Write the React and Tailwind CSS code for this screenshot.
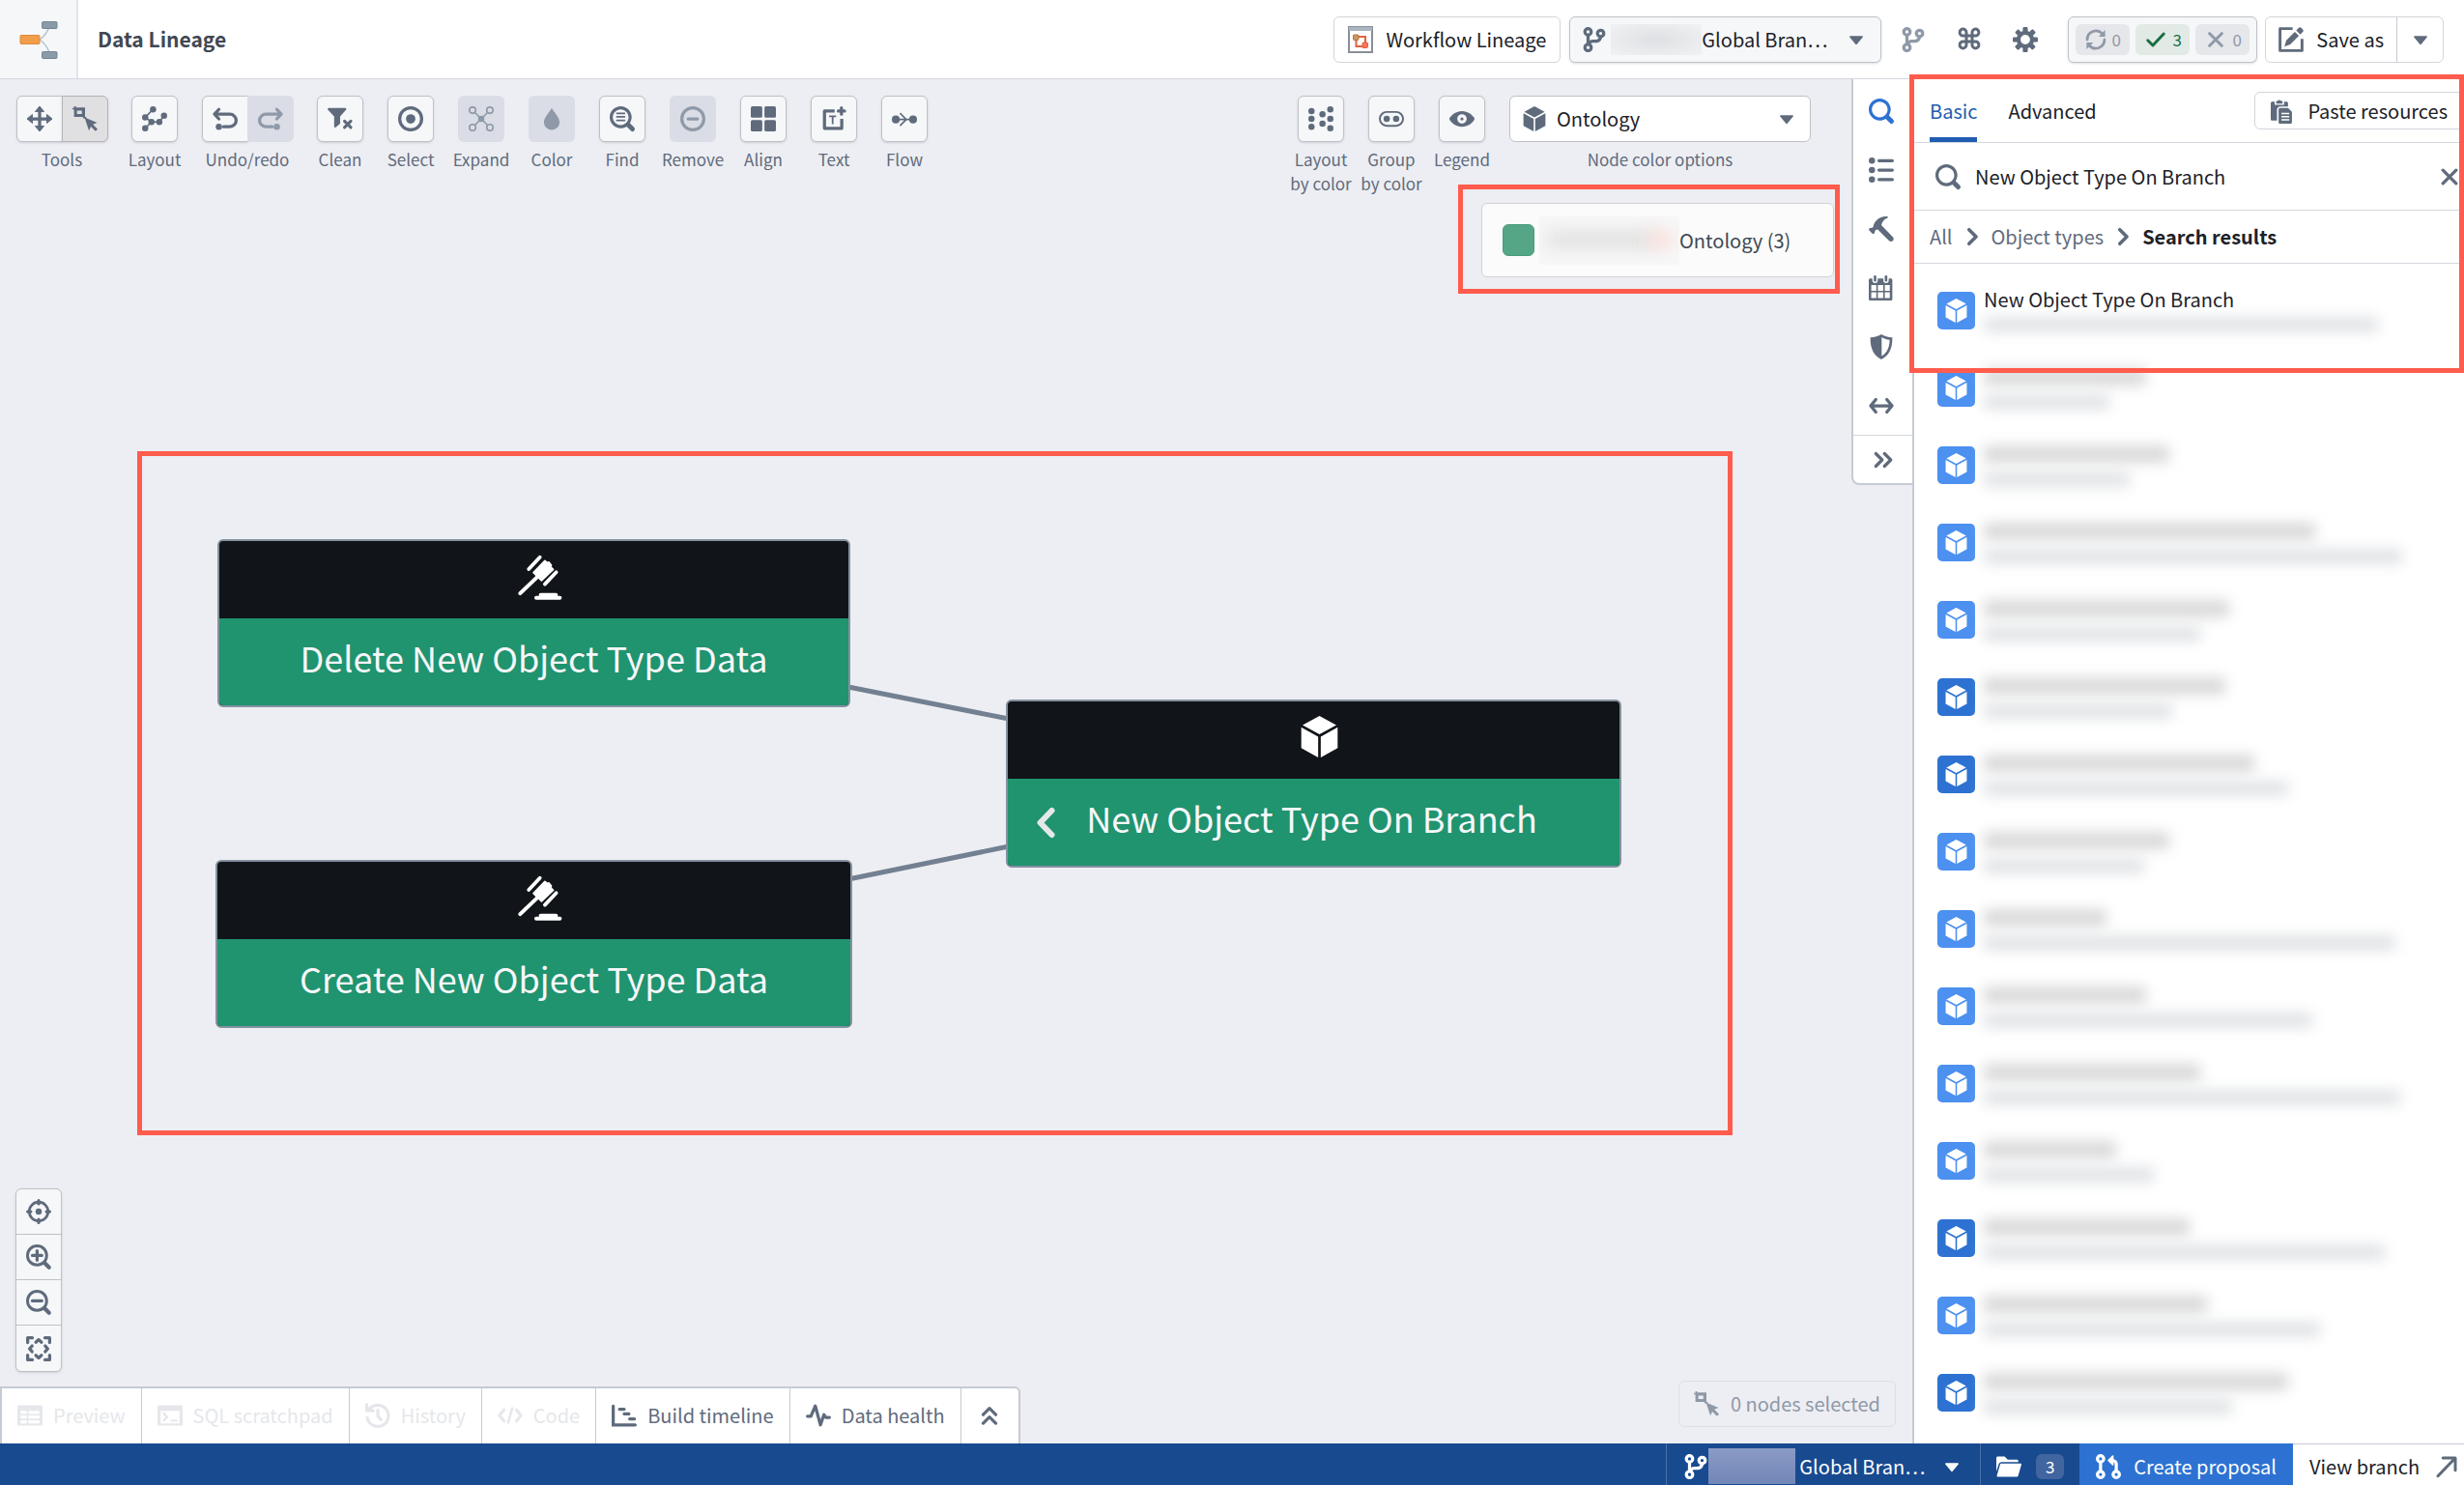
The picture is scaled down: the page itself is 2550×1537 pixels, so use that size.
import React, { useState } from 'react';
import clsx from 'clsx';

// 16x16 icon set, filled with the current text color
const icons = {
  search: (
    <path d="M15.55 13.43l-2.67-2.68a6.94 6.94 0 001.11-3.76c0-3.87-3.13-7-7-7s-7 3.13-7 7 3.13 7 7 7c1.39 0 2.68-.42 3.76-1.11l2.68 2.67a1.498 1.498 0 102.12-2.12zm-8.56-1.44c-2.76 0-5-2.24-5-5s2.24-5 5-5 5 2.24 5 5-2.24 5-5 5z" />
  ),
  branch: (
    <path d="M12 1c-1.66 0-3 1.34-3 3 0 1.25.76 2.32 1.85 2.77A2.02 2.02 0 019 8H7c-.73 0-1.41.21-2 .55V5.82C6.16 5.4 7 4.3 7 3c0-1.66-1.34-3-3-3S1 1.34 1 3c0 1.3.84 2.4 2 2.82v4.37c-1.16.4-2 1.51-2 2.81 0 1.66 1.34 3 3 3s3-1.34 3-3c0-1.04-.53-1.95-1.32-2.49.35-.31.81-.51 1.32-.51h2c1.92 0 3.52-1.35 3.91-3.15A2.996 2.996 0 0012 1zM4 2c.55 0 1 .45 1 1s-.45 1-1 1-1-.45-1-1 .45-1 1-1zm0 12c-.55 0-1-.45-1-1s.45-1 1-1 1 .45 1 1-.45 1-1 1zm8-9c-.55 0-1-.45-1-1s.45-1 1-1 1 .45 1 1-.45 1-1 1z" />
  ),
  cog: (
    <path d="M15.19 6.39h-1.85c-.11-.37-.27-.71-.45-1.04l1.36-1.36c.31-.31.31-.82 0-1.13l-1.13-1.13a.803.803 0 00-1.13 0l-1.36 1.36c-.33-.17-.67-.33-1.04-.44V.79c0-.44-.36-.8-.8-.8h-1.6c-.44 0-.8.36-.8.8v1.86c-.39.12-.75.28-1.1.47l-1.3-1.3c-.3-.3-.79-.3-1.09 0L1.82 2.91c-.3.3-.3.79 0 1.09l1.3 1.3c-.2.34-.36.7-.48 1.09H.79c-.44 0-.8.36-.8.8v1.6c0 .44.36.8.8.8h1.85c.11.37.27.71.45 1.04l-1.36 1.36c-.31.31-.31.82 0 1.13l1.13 1.13c.31.31.82.31 1.13 0l1.36-1.36c.33.18.67.33 1.04.44v1.86c0 .44.36.8.8.8h1.6c.44 0 .8-.36.8-.8v-1.86c.39-.12.75-.28 1.1-.47l1.3 1.3c.3.3.79.3 1.09 0l1.09-1.09c.3-.3.3-.79 0-1.09l-1.3-1.3c.19-.35.36-.71.48-1.1h1.85c.44 0 .8-.36.8-.8v-1.6a.816.816 0 00-.81-.79zm-7.2 4.6c-1.66 0-3-1.34-3-3s1.34-3 3-3 3 1.34 3 3-1.34 3-3 3z" />
  ),
  command: (
    <g fill="none" stroke="currentColor" strokeWidth="2">
      <rect x="6" y="6" width="4" height="4" />
      <path d="M6 6H3.8A2.3 2.3 0 116 3.8zM10 6V3.8A2.3 2.3 0 1112.2 6zM10 10h2.2a2.3 2.3 0 11-2.2 2.2zM6 10v2.2A2.3 2.3 0 113.8 10z" />
    </g>
  ),
  caret: <path d="M3.9 5.5h8.2c.5 0 .7.5.4.9L8.5 11.2a.7.7 0 01-1 0L3.5 6.4c-.3-.4-.1-.9.4-.9z" />,
  move: (
    <g>
      <path d="M8 0L5.2 3.4h5.6zM8 16l-2.8-3.4h5.6zM0 8l3.4-2.8v5.6zM16 8l-3.4-2.8v5.6z" stroke="currentColor" strokeWidth=".6" strokeLinejoin="round" />
      <path d="M7 2.5h2V7h4.5v2H9v4.5H7V9H2.5V7H7z" />
    </g>
  ),
  areaSelect: (
    <g>
      <path d="M1 0h1.2v.8H8v5.9h.8v1H6.7v-1H1V2H0V1h1zM2.9 2.7v2.2H6V2.7z" fillRule="evenodd" />
      <path d="M7.7 7l8 3.4-2.7 1.2 3 3-1.3 1.3-3-3-1.2 2.6z" />
    </g>
  ),
  graph: (
    <g>
      <path d="M2 7L7 2M2 14l4-4M2 7l4 3h5l3-4" fill="none" stroke="currentColor" strokeWidth="1" />
      <circle cx="7" cy="2" r="2" /><circle cx="2" cy="7" r="2" /><circle cx="14" cy="6" r="2" />
      <circle cx="6" cy="10" r="2" /><circle cx="11" cy="10" r="2" /><circle cx="2" cy="14" r="2" />
    </g>
  ),
  undo: (
    <g>
      <path d="M4 2L1.2 5 4 8M1.5 5H11a4 4 0 010 8H7" fill="none" stroke="currentColor" strokeWidth="2" strokeLinecap="round" strokeLinejoin="round" />
      <circle cx="4" cy="13" r="2" />
    </g>
  ),
  redo: (
    <g>
      <path d="M12 2l2.8 3L12 8M14.5 5H5a4 4 0 000 8h4" fill="none" stroke="currentColor" strokeWidth="2" strokeLinecap="round" strokeLinejoin="round" />
      <circle cx="12" cy="13" r="2" />
    </g>
  ),
  filterRemove: (
    <g>
      <path d="M.8 1h10.4c.7 0 1 .8.5 1.3L8 6.5V11l-3 2.5c-.3.2-.8 0-.8-.4V6.5L.3 2.3C-.2 1.800.1 1 .8 1z" />
      <path d="M10.800 9.500l4 4M14.800 9.500l-4 4" stroke="currentColor" strokeWidth="1.9" strokeLinecap="round" />
    </g>
  ),
  selection: (
    <g>
      <circle cx="8" cy="8" r="7" fill="none" stroke="currentColor" strokeWidth="2" />
      <circle cx="8" cy="8" r="3" />
    </g>
  ),
  layout: (
    <g fill="none" stroke="currentColor" strokeWidth="1">
      <path d="M4 4l8 8M12 4l-8 8" />
      <circle cx="2.5" cy="2.5" r="2" /><circle cx="13.5" cy="2.5" r="2" />
      <circle cx="2.5" cy="13.5" r="2" /><circle cx="13.5" cy="13.5" r="2" />
      <circle cx="8" cy="8" r="2" fill="currentColor" stroke="none" />
    </g>
  ),
  tint: <path d="M8 1c.9 2.1 5 5.8 5 9.300A4.850 4.850 0 018 15a4.850 4.850 0 01-5-4.700C3 6.800 7.100 3.100 8 1z" />,
  searchText: (
    <g>
      <path d="M15.55 13.43l-2.67-2.68a6.94 6.94 0 001.11-3.76c0-3.87-3.13-7-7-7s-7 3.13-7 7 3.13 7 7 7c1.39 0 2.68-.42 3.76-1.11l2.68 2.67a1.498 1.498 0 102.12-2.12zm-8.56-1.44c-2.76 0-5-2.24-5-5s2.24-5 5-5 5 2.24 5 5-2.24 5-5 5z" />
      <path d="M4.5 4.5h5M4.5 6.7h5M4.5 9h5" stroke="currentColor" strokeWidth="1" strokeLinecap="round" />
    </g>
  ),
  remove: (
    <g fill="none" stroke="currentColor" strokeWidth="2" strokeLinecap="round">
      <circle cx="8" cy="8" r="7" />
      <path d="M5 8h6" />
    </g>
  ),
  grid: (
    <g>
      <rect width="7.3" height="7.3" rx="1" /><rect x="8.7" width="7.3" height="7.3" rx="1" />
      <rect y="8.7" width="7.3" height="7.3" rx="1" /><rect x="8.7" y="8.7" width="7.3" height="7.3" rx="1" />
    </g>
  ),
  newText: (
    <g>
      <path d="M8.5 3H2v11h11V8" fill="none" stroke="currentColor" strokeWidth="2" strokeLinejoin="round" />
      <path d="M12.800 1v4M10.800 3h4" stroke="currentColor" strokeWidth="2" strokeLinecap="round" />
      <path d="M5 6.4h4.4M7.2 6.4v5" stroke="currentColor" strokeWidth="1.1" />
    </g>
  ),
  flow: (
    <g>
      <path d="M3 8.4h10M5.5 4.7l3.7 3.7-3.7 3.7" fill="none" stroke="currentColor" strokeWidth="1" strokeLinecap="round" />
      <circle cx="2.5" cy="8.4" r="2.5" /><circle cx="13.5" cy="8.4" r="2.5" />
    </g>
  ),
  layoutGroup: (
    <g>
      <circle cx="2" cy="3" r="2" /><circle cx="2" cy="8" r="2" /><circle cx="2" cy="13" r="2" />
      <circle cx="9" cy="5" r="2" /><circle cx="9" cy="11" r="2" />
      <circle cx="14" cy="2" r="2" /><circle cx="14" cy="8" r="2" /><circle cx="14" cy="14" r="2" />
    </g>
  ),
  groupObjects: (
    <g>
      <rect x=".6" y="3.6" width="14.8" height="8.8" rx="4.4" fill="none" stroke="currentColor" strokeWidth="1.2" />
      <circle cx="5" cy="8" r="2" /><circle cx="11" cy="8" r="2" />
    </g>
  ),
  eye: (
    <path fillRule="evenodd" d="M8 3c3.700 0 6.600 2.300 7.900 4.600.1.200.1.500 0 .8C14.600 10.700 11.700 13 8 13S1.400 10.700.1 8.400a.8.8 0 010-.8C1.400 5.300 4.300 3 8 3zm0 2a3 3 0 100 6 3 3 0 000-6zm0 2a1 1 0 110 2 1 1 0 010-2z" />
  ),
  cube: <path d="M8 0l6.500 3.500L8 7.100 1.500 3.500zM1 4.400l6.500 3.600v8L1 12.400zM15 4.400L8.500 8v8l6.500-3.600z" />,
  list: (
    <g>
      <circle cx="2" cy="2" r="2" /><circle cx="2" cy="8" r="2" /><circle cx="2" cy="14" r="2" />
      <path d="M6.5 2H15M6.5 8H15M6.5 14H15" stroke="currentColor" strokeWidth="2" strokeLinecap="round" />
    </g>
  ),
  hammer: (
    <path d="M12 .1C9.500-.3 6.400.6 4.700 2.800 3.500 4.200 3 5.200 2.800 6.900L1.200 7.400c-.3 0-.5 0-.8.3l-.2.300c-.3.300-.2.600 0 .8l2.200 2.200c.3.200.6.200.8 0l.3-.3c.3-.3.300-.5.300-.8l.5-1.300 1.400-.3 7.300 7.200c.6.600 1.600.6 2.300 0 .7-.6.700-1.700 0-2.400L8 5.600C8.600 3.300 9.600 1.800 12 .9c.3-.1.300-.7 0-.8z" />
  ),
  calendar: (
    <g>
      <path d="M0 3c0-.6.400-1 1-1h1.300v1.200a1.700 1.700 0 003.400 0V2h3.600v1.200a1.700 1.700 0 003.400 0V2H14c.6 0 1 .4 1 1v12c0 .6-.4 1-1 1H1c-.6 0-1-.4-1-1zm1.600 3.200v3.600h3.200V6.200zm4.200 0v3.600h3.400V6.200zm4.400 0v3.600h3.200V6.200zM1.600 10.800v3.600h3.200v-3.600zm4.200 0v3.600h3.400v-3.600zm4.400 0v3.600h3.200v-3.600z" fillRule="evenodd" />
      <rect x="3.2" y="0" width="1.6" height="4" rx=".8" /><rect x="10.2" y="0" width="1.6" height="4" rx=".8" />
    </g>
  ),
  shield: (
    <path fillRule="evenodd" d="M8 0c1.800 1.200 4.200 1.900 7 2 .1 6.800-1.900 11.600-7 14C2.900 13.600.9 8.800 1 2c2.800-.1 5.200-.8 7-2zm.2 1.900v12c3.600-2 5-5.500 5.100-10.300-2-.2-3.700-.8-5.100-1.700z" />
  ),
  arrowsH: (
    <path d="M4.500 4L1.200 8l3.300 4M11.500 4l3.300 4-3.300 4M1.500 8h13" fill="none" stroke="currentColor" strokeWidth="2" strokeLinecap="round" strokeLinejoin="round" />
  ),
  doubleRight: (
    <path d="M4.500 4l4 4-4 4M10 4l4 4-4 4" fill="none" stroke="currentColor" strokeWidth="2" strokeLinecap="round" strokeLinejoin="round" />
  ),
  doubleUp: (
    <path d="M4 7.500l4-4 4 4M4 13l4-4 4 4" fill="none" stroke="currentColor" strokeWidth="2" strokeLinecap="round" strokeLinejoin="round" />
  ),
  chevronRight: (
    <path d="M6 3.500L10.500 8 6 12.500" fill="none" stroke="currentColor" strokeWidth="2.2" strokeLinecap="round" strokeLinejoin="round" />
  ),
  refresh: (
    <g>
      <path d="M1.500 8A6.500 6.500 0 0113 3.800M14.500 8A6.500 6.500 0 013 12.200" fill="none" stroke="currentColor" strokeWidth="2" strokeLinecap="round" />
      <path d="M15 .8v5h-5zM1 15.200v-5h5z" />
    </g>
  ),
  tick: (
    <path d="M2.500 8.500L6 12l7.500-8" fill="none" stroke="currentColor" strokeWidth="2" strokeLinecap="round" strokeLinejoin="round" />
  ),
  cross: (
    <path d="M3.800 3.800l8.400 8.400M12.200 3.800l-8.400 8.400" fill="none" stroke="currentColor" strokeWidth="2" strokeLinecap="round" />
  ),
  edit: (
    <g>
      <path d="M9 1H1v14h14V7.500" fill="none" stroke="currentColor" strokeWidth="1.8" strokeLinejoin="round" />
      <path d="M3.800 12.500l1.200-4 5.400-5.500 2.600 2.600L7.500 11zM11.300 2.200l1.600-1.700c.5-.5 1.100-.5 1.600 0l1 1c.5.500.5 1.100 0 1.600l-1.600 1.700z" />
    </g>
  ),
  clipboard: (
    <g>
      <path d="M0 3c0-.6.400-1 1-1h1.500v2h6V2H10c.6 0 1 .4 1 1v2H6c-1.100 0-2 .9-2 2v7H1c-.6 0-1-.4-1-1z" />
      <path d="M3.500 1.500h1a1.200 1.200 0 012 0h1v1.700h-4z" />
      <path fillRule="evenodd" d="M6 6h5l2.500 2.500V15c0 .6-.4 1-1 1H6c-.6 0-1-.4-1-1V7c0-.6.400-1 1-1zm.8 3v1h5V9zm0 2v1h5v-1zm0 2v1h5v-1z" />
    </g>
  ),
  locate: (
    <g>
      <circle cx="8" cy="8" r="6" fill="none" stroke="currentColor" strokeWidth="1.7" />
      <circle cx="8" cy="8" r="2" />
      <path d="M8 1v2M8 13v2M1 8h2M13 8h2" stroke="currentColor" strokeWidth="2" strokeLinecap="round" />
    </g>
  ),
  zoomIn: (
    <g fill="none" stroke="currentColor" strokeLinecap="round">
      <circle cx="7" cy="7" r="6.100" strokeWidth="1.8" />
      <path d="M12 12l2.600 2.600" strokeWidth="2.6" />
      <path d="M4 7h6M7 4v6" strokeWidth="2" />
    </g>
  ),
  zoomOut: (
    <g fill="none" stroke="currentColor" strokeLinecap="round">
      <circle cx="7" cy="7" r="6.100" strokeWidth="1.8" />
      <path d="M12 12l2.600 2.600" strokeWidth="2.6" />
      <path d="M4 7h6" strokeWidth="2" />
    </g>
  ),
  zoomFit: (
    <g fill="none" stroke="currentColor" strokeWidth="2" strokeLinecap="round" strokeLinejoin="round">
      <path d="M1 4V1h3M12 1h3v3M15 12v3h-3M4 15H1v-3" />
      <path d="M6.200 3.800L8 2.200l1.800 1.600M6.200 12.200L8 13.800l1.800-1.600M3.800 6.200L2.200 8l1.600 1.800M12.200 6.200L13.800 8l-1.600 1.800" />
    </g>
  ),
  table: (
    <path fillRule="evenodd" d="M1 1.500h14c.6 0 1 .4 1 1v11c0 .6-.4 1-1 1H1c-.6 0-1-.4-1-1v-11c0-.6.400-1 1-1zM2 5v2h4V5zm5 0v2h7V5zM2 8v2h4V8zm5 0v2h7V8zm-5 3v2h4v-2zm5 0v2h7v-2z" />
  ),
  console: (
    <g>
      <path fillRule="evenodd" d="M1 1.500h14c.6 0 1 .4 1 1v11c0 .6-.4 1-1 1H1c-.6 0-1-.4-1-1v-11c0-.6.400-1 1-1zM2 5v8h12V5z" />
      <path d="M4 6.700L6 9l-2 2.200M9 11.300h3" fill="none" stroke="currentColor" strokeWidth="1.5" strokeLinecap="round" />
    </g>
  ),
  history: (
    <g fill="none" stroke="currentColor" strokeWidth="2" strokeLinecap="round" strokeLinejoin="round">
      <path d="M1.300 9.500A6.800 6.800 0 102.800 3.800M1 1v4h4" />
      <path d="M8 4.500v3.900l2 2.300" />
    </g>
  ),
  code: (
    <g fill="none" stroke="currentColor" strokeWidth="2" strokeLinecap="round" strokeLinejoin="round">
      <path d="M4 4.500L1.200 8 4 11.500M12 4.500L14.800 8 12 11.500" />
      <path d="M9.300 3.500l-2.600 9" strokeWidth="1.6" />
    </g>
  ),
  gantt: (
    <g fill="none" stroke="currentColor" strokeWidth="2" strokeLinecap="round">
      <path d="M1 2v12h14" />
      <path d="M5 4h3M8 7h3M11.500 10.300h3" />
    </g>
  ),
  pulse: (
    <path d="M1 8.500h2.200L6 2l3.300 12 2.200-6.500 1.200 1.800H15" fill="none" stroke="currentColor" strokeWidth="2" strokeLinecap="round" strokeLinejoin="round" />
  ),
  folder: (
    <g>
      <path d="M0 2.500c0-.6.400-1 1-1h4.300l2 2H13c.6 0 1 .4 1 1V5H3.500c-.9 0-1.600.5-1.900 1.300L0 11z" />
      <path d="M3.300 6h12c.5 0 .8.400.6.900l-2 7c-.1.400-.5.600-.9.600H1c-.5 0-.8-.4-.6-.9l2-7c.1-.4.500-.6.900-.6z" />
    </g>
  ),
  pull: (
    <g fill="none" stroke="currentColor" strokeWidth="2">
      <circle cx="3" cy="3" r="2" /><circle cx="3" cy="13" r="2" /><circle cx="13" cy="13" r="2" />
      <path d="M3 5v6M13 11V6.500A2.500 2.500 0 0010.500 4H9" />
      <path d="M10.800 1.300L8 4l2.800 2.700z" fill="currentColor" strokeWidth="1" strokeLinejoin="round" />
    </g>
  ),
  arrowUpRight: (
    <path d="M2 14.500L13.500 2.500M5.500 2h8.500v8.500" fill="none" stroke="currentColor" strokeWidth="2" strokeLinecap="round" strokeLinejoin="round" />
  ),
  gavel: (
    <g fill="none" stroke="currentColor" strokeLinecap="round">
      <path d="M3.900 4.900L7.900.6M9.700 10.300l4.100-4.300" strokeWidth="1.3" />
      <path d="M5.600 6.100l4.100-4.200.9.700.5-.2.900 1.100-.2.600.9.900L8.500 9z" fill="currentColor" strokeWidth=".6" strokeLinejoin="round" />
      <path d="M7 7.700L.8 13.600" strokeWidth="1.4" />
      <path d="M6.600 15.200h8.500M8.200 14.200h5.500" strokeWidth="1.400" />
    </g>
  ),
};

function Icon({ name, className = 'w-[26px] h-[26px]' }) {
  return (
    <svg viewBox="0 0 16 16" fill="currentColor" aria-hidden="true" className={clsx('shrink-0 overflow-visible', className)}>
      {icons[name]}
    </svg>
  );
}

const leftTools = [
  { label: 'Tools', buttons: [{ icon: 'move' }, { icon: 'areaSelect', active: true }] },
  { label: 'Layout', buttons: [{ icon: 'graph' }] },
  { label: 'Undo/redo', buttons: [{ icon: 'undo' }, { icon: 'redo', disabled: true }] },
  { label: 'Clean', buttons: [{ icon: 'filterRemove' }] },
  { label: 'Select', buttons: [{ icon: 'selection' }] },
  { label: 'Expand', buttons: [{ icon: 'layout', disabled: true }] },
  { label: 'Color', buttons: [{ icon: 'tint', disabled: true }] },
  { label: 'Find', buttons: [{ icon: 'searchText' }] },
  { label: 'Remove', buttons: [{ icon: 'remove', disabled: true }] },
  { label: 'Align', buttons: [{ icon: 'grid' }] },
  { label: 'Text', buttons: [{ icon: 'newText' }] },
  { label: 'Flow', buttons: [{ icon: 'flow' }] },
];

const rightTools = [
  { label: 'Layout by color', buttons: [{ icon: 'layoutGroup' }] },
  { label: 'Group by color', buttons: [{ icon: 'groupObjects' }] },
  { label: 'Legend', buttons: [{ icon: 'eye' }] },
];

const railItems = ['search', 'list', 'hammer', 'calendar', 'shield', 'arrowsH'];

const bottomTabs = [
  { label: 'Preview', icon: 'table', disabled: true },
  { label: 'SQL scratchpad', icon: 'console', disabled: true },
  { label: 'History', icon: 'history', disabled: true },
  { label: 'Code', icon: 'code', disabled: true },
  { label: 'Build timeline', icon: 'gantt' },
  { label: 'Data health', icon: 'pulse' },
];

// Redacted rows keep only the length of their two lines
const results = [
  { name: 'New Object Type On Branch', sub: 408 },
  { title: 168, sub: 130 },
  { title: 192, sub: 151 },
  { title: 343, sub: 433 },
  { title: 254, sub: 224 },
  { title: 250, sub: 195, dark: true },
  { title: 280, sub: 315, dark: true },
  { title: 192, sub: 166 },
  { title: 127, sub: 426 },
  { title: 168, sub: 340 },
  { title: 224, sub: 431 },
  { title: 137, sub: 176 },
  { title: 213, sub: 415, dark: true },
  { title: 231, sub: 348 },
  { title: 315, sub: 257, dark: true },
];

function ToolGroup({ label, buttons, narrow }) {
  return (
    <div className={clsx('flex flex-col items-center gap-[5px]', buttons.length > 1 ? 'w-[94px]' : 'w-12')}>
      <div className="flex">
        {buttons.map((b, i) => (
          <button
            key={b.icon}
            type="button"
            disabled={b.disabled}
            aria-label={label}
            className={clsx(
              'flex h-12 w-12 items-center justify-center',
              i === 0 && 'rounded-l-md',
              i === buttons.length - 1 && 'rounded-r-md',
              i > 0 && '-ml-px',
              b.disabled && 'bg-[#dadde5] text-[#8f99a8]',
              b.active && 'border border-[#b4b5b9] bg-[#e0dfe1] text-[#5f6b7c] shadow-sm',
              !b.disabled && !b.active && 'border border-[#bfc1c5] bg-[#f6f7f9] text-[#5f6b7c] shadow-sm'
            )}
          >
            <Icon name={b.icon} />
          </button>
        ))}
      </div>
      <span className={clsx('text-center text-[17px] leading-[25px] text-[#5f6b7c]', narrow ? 'w-[72px]' : 'whitespace-nowrap')}>
        {label}
      </span>
    </div>
  );
}

function Header() {
  return (
    <header className="flex h-[82px] shrink-0 items-center border-b border-[#d3d8de] bg-white">
      <div className="flex h-full w-[81px] shrink-0 items-center justify-center border-r-2 border-[#e1e5e9] bg-[#f6f7f9]">
        <svg viewBox="0 0 40 40" className="h-10 w-10">
          <path d="M21 20C27 16 29 12 31 7M21 20c6 4 8 8 10 13" fill="none" stroke="#b3c1cc" strokeWidth="1.5" />
          <rect x="1" y="15.5" width="20" height="9" rx="1" fill="#f29d49" stroke="#dd8c3c" />
          <rect x="23.5" y="1.5" width="15.5" height="7" rx="1" fill="#8a9ba8" stroke="#738694" />
          <rect x="23.5" y="32.5" width="15.5" height="7" rx="1" fill="#8a9ba8" stroke="#738694" />
        </svg>
      </div>
      <h1 className="ml-5 text-[21px] font-semibold text-[#404854]">Data Lineage</h1>

      <div className="ml-auto flex items-center text-xl text-[#1c2127]">
        <button type="button" className="flex h-12 items-center gap-[13px] rounded-md border border-[#d3d5da] bg-white px-3.5">
          <svg viewBox="0 0 26 28" className="h-7 w-[26px]">
            <rect x="1" y="1" width="24" height="26" fill="#fff" stroke="#8a8f96" strokeWidth="2" />
            <rect x="1" y="1" width="24" height="4" fill="#a9b6c1" />
            <path d="M8.500 12v9h10M9 11h9v9" fill="none" stroke="#e0633f" strokeWidth="2" />
            <rect x="5.5" y="9" width="5.5" height="5.5" rx="1" fill="#c99765" stroke="#a97943" />
            <rect x="15" y="17" width="5.5" height="5.500" rx="1" fill="#ff7358" stroke="#eb5a42" />
          </svg>
          Workflow Lineage
        </button>
        <button type="button" className="ml-[9px] flex h-12 w-[323px] items-center rounded-md border border-[#bfc3ca] bg-[#f6f7f9] pl-3 pr-[13px] shadow-sm">
          <Icon name="branch" className="h-[26px] w-[26px] text-[#5f6b7c]" />
          <span className="ml-1 h-8 w-[94px] bg-[#ecedef] bg-radial from-[#dfe0e3] to-[#f1f2f4]" />
          <span className="truncate">Global Bran…</span>
          <Icon name="caret" className="ml-auto h-6 w-6 text-[#5f6b7c]" />
        </button>
        <div className="ml-1 mr-[15px] flex text-[#5f6b7c]">
          <button type="button" aria-label="Branches" className="flex w-[58px] justify-center text-[#8f99a8]"><Icon name="branch" /></button>
          <button type="button" aria-label="Shortcuts" className="flex w-[58px] justify-center"><Icon name="command" className="h-6 w-6" /></button>
          <button type="button" aria-label="Settings" className="flex w-[58px] justify-center"><Icon name="cog" /></button>
        </div>
        <div className="flex h-12 items-center gap-1.5 rounded-md border border-[#bfc3ca] bg-[#f6f7f9] px-[7px] text-[17px] shadow-sm">
          <span className="flex h-8 w-14 items-center justify-center gap-1.5 rounded-md bg-[#e5e7eb] text-[#8f99a8]"><Icon name="refresh" className="h-[22px] w-[22px]" />0</span>
          <span className="flex h-8 w-14 items-center justify-center gap-1.5 rounded-md bg-[#e2eae6] text-[#1c6e42]"><Icon name="tick" className="h-6 w-6" />3</span>
          <span className="flex h-8 w-14 items-center justify-center gap-1.5 rounded-md bg-[#e5e7eb] text-[#8f99a8]"><Icon name="cross" className="h-6 w-6" />0</span>
        </div>
        <div className="ml-2 mr-[21px] flex h-12 rounded-md border border-[#d3d5da]">
          <button type="button" className="flex items-center gap-[13px] border-r border-[#c5cbd3] px-[13px]">
            <Icon name="edit" className="h-[26px] w-[26px] text-[#5f6b7c]" />
            Save as
          </button>
          <button type="button" aria-label="More save options" className="flex w-[47px] items-center justify-center text-[#5f6b7c]">
            <Icon name="caret" className="h-6 w-6" />
          </button>
        </div>
      </div>
    </header>
  );
}

function GraphNode({ icon, label, collapsible, className }) {
  return (
    <div className={clsx('absolute overflow-hidden rounded-md border-2 border-[#8591a0] bg-[#111418]', className)}>
      <div className="flex h-20 items-start justify-center pl-3 pt-[15px] text-white">
        <Icon name={icon} className={icon === 'gavel' ? 'h-[46px] w-[46px]' : 'h-[43px] w-[43px]'} />
      </div>
      <div className="flex h-[90px] items-center justify-center bg-[#20936f] pb-2.5 text-4xl text-[#f6f7f9]">
        {collapsible && (
          <svg viewBox="0 0 20 33" className="mr-8 mt-2.5 h-[33px] w-5" fill="none">
            <path d="M16.500 4L4.500 16.500l12 12.500" stroke="#e5e8eb" strokeWidth="6" strokeLinecap="round" strokeLinejoin="round" />
          </svg>
        )}
        <span className={clsx('whitespace-nowrap leading-[52px]', collapsible && 'mr-14')}>{label}</span>
      </div>
    </div>
  );
}

function Graph() {
  return (
    <div className="absolute inset-0">
      <svg className="absolute inset-0 h-full w-full" aria-hidden="true">
        <path d="M878 629l166 33M878 828l166-34" stroke="#738091" strokeWidth="5" />
      </svg>
      <GraphNode icon="gavel" label="Delete New Object Type Data" className="left-[225px] top-[476px] w-[655px]" />
      <GraphNode icon="gavel" label="Create New Object Type Data" className="left-[223px] top-[808px] w-[659px]" />
      <GraphNode icon="cube" label="New Object Type On Branch" collapsible className="left-[1041px] top-[642px] w-[637px]" />
      <div className="absolute left-[142px] top-[385px] h-[708px] w-[1651px] border-[5px] border-[#ff5c4d]" />
    </div>
  );
}

function Legend() {
  return (
    <div className="absolute right-3 top-[109px] border-[5px] border-[#ff5c4d] pb-3 pl-[19px] pr-px pt-3.5">
      <div className="flex h-[77px] w-[365px] items-center rounded-md border border-[#d0d2d6] bg-[#fbfbfb] pl-[21px] text-xl text-[#404854]">
        <span className="h-[33px] w-[33px] rounded-md border border-[#4a9c7c] bg-[#54a687]" />
        <span className="relative ml-[5px] h-[50px] w-[145px] overflow-hidden bg-[#f7f7f7]">
          <span className="absolute left-2 top-4 h-4 w-28 bg-[#dedede] blur-[9px]" />
          <span className="absolute right-2 top-4 h-4 w-6 bg-[#fbded9] blur-[8px]" />
        </span>
        Ontology (3)
      </div>
    </div>
  );
}

function Toolbar() {
  return (
    <div className="flex items-start justify-between pl-[17px] pr-[42px] pt-[17px]">
      <div className="flex gap-[25px]">
        {leftTools.map((group) => <ToolGroup key={group.label} {...group} />)}
      </div>
      <div className="flex gap-[25px]">
        {rightTools.map((group) => <ToolGroup key={group.label} {...group} narrow />)}
        <div className="flex w-[312px] flex-col items-center gap-[5px]">
          <div className="flex h-12 w-full items-center gap-2.5 rounded-md border border-[#bfc1c5] bg-white px-3 text-[#5f6b7c]">
            <Icon name="cube" />
            <select id="node-color" className="h-full flex-1 appearance-none bg-transparent text-xl text-[#1c2127] outline-none">
              <option>Ontology</option>
            </select>
            <Icon name="caret" className="pointer-events-none h-6 w-6" />
          </div>
          <label htmlFor="node-color" className="text-[17px] leading-[25px] text-[#5f6b7c]">Node color options</label>
        </div>
      </div>
    </div>
  );
}

function Rail() {
  return (
    <nav className="w-[63px] shrink-0 self-start rounded-bl-lg border-b-2 border-l-2 border-[#c5cbd3] bg-white pt-0.5 text-[#5f6b7c]">
      {railItems.map((name, i) => (
        <button key={name} type="button" aria-label={name} className={clsx('flex h-[61px] w-full items-center justify-center pr-1', i === 0 && 'text-[#2d72d2]')}>
          <Icon name={name} />
        </button>
      ))}
      <button type="button" aria-label="Collapse" className="flex h-[50px] w-full items-center justify-center border-t border-[#d3d8de] pr-1">
        <Icon name="doubleRight" />
      </button>
    </nav>
  );
}

function CanvasFooter() {
  return (
    <div className="relative">
      <div className="mb-[9px] ml-4 flex w-12 flex-col divide-y divide-[#bfc1c5] rounded-md border border-[#bfc1c5] bg-[#f6f7f9] text-[#5f6b7c] shadow-sm">
        {['locate', 'zoomIn', 'zoomOut', 'zoomFit'].map((name) => (
          <button key={name} type="button" aria-label={name} className="flex h-[47px] items-center justify-center">
            <Icon name={name} />
          </button>
        ))}
      </div>
      <div className="flex items-end justify-between">
        <div className="flex h-[59px] divide-x divide-[#c5cbd3] rounded-tr-md border-x-2 border-t-2 border-[#c5cbd3] bg-white">
          {bottomTabs.map((tab) => (
            <button
              key={tab.label}
              type="button"
              disabled={tab.disabled}
              className={clsx('flex items-center gap-[11px] px-4 pb-0.5 text-xl', tab.disabled ? 'text-[#e5e7eb]' : 'text-[#5f6b7c]')}
            >
              <Icon name={tab.icon} />
              {tab.label}
            </button>
          ))}
          <button type="button" aria-label="Expand panel" className="flex w-[59px] items-center justify-center pb-0.5 text-[#5f6b7c]">
            <Icon name="doubleUp" />
          </button>
        </div>
        <div className="mb-[17px] mr-[17px] flex h-12 items-center gap-3 rounded-md border border-[#dcdfe4] px-[15px] text-xl text-[#8f99a8]">
          <Icon name="areaSelect" />
          0 nodes selected
        </div>
      </div>
    </div>
  );
}

function ResultRow({ name, title, sub, dark }) {
  return (
    <li className="flex h-20 items-center gap-[9px] pl-6">
      <span className={clsx('flex h-[39px] w-[39px] shrink-0 items-center justify-center rounded-[5px] text-white', dark ? 'bg-[#2d72d2]' : 'bg-[#4c90f0]')}>
        <Icon name="cube" className="h-[25px] w-[25px]" />
      </span>
      <div className="min-w-0 pt-1">
        <div className="flex h-[26px] items-center text-xl text-[#1c2127]">
          {name || <span className="h-[18px] bg-[#d9d9d9] blur-[7px]" style={{ width: title }} />}
        </div>
        <div className="flex h-[26px] items-center">
          <span className="h-[16px] bg-[#e1e3e6] blur-[7px]" style={{ width: sub }} />
        </div>
      </div>
    </li>
  );
}

function SearchPanel() {
  const [query, setQuery] = useState('New Object Type On Branch');

  return (
    <aside className="relative w-[571px] shrink-0 border-l-2 border-[#c5cbd3] bg-white text-xl text-[#1c2127]">
      <div className="flex h-[66px] items-center border-b border-[#d3d8de] pl-4">
        <button type="button" className="h-full border-b-[5px] border-[#215db0] pt-[5px] text-[#215db0]">Basic</button>
        <button type="button" className="ml-8 h-full">Advanced</button>
        <button type="button" className="ml-auto flex h-[39px] items-center gap-3 rounded-md border border-[#d3d5da] px-4">
          <Icon name="clipboard" className="h-[26px] w-[26px] text-[#5f6b7c]" />
          Paste resources
        </button>
      </div>
      <div className="flex h-[70px] items-center border-b border-[#d3d8de] pl-[22px] pr-0.5 text-[#5f6b7c]">
        <Icon name="search" />
        <input
          aria-label="Search"
          value={query}
          onChange={(e) => setQuery(e.target.value)}
          className="ml-[15px] min-w-0 flex-1 text-[#1c2127] outline-none"
        />
        <button type="button" aria-label="Clear" onClick={() => setQuery('')}><Icon name="cross" /></button>
      </div>
      <nav className="flex h-[55px] items-center gap-[7px] border-b border-[#d3d8de] pl-4 text-[#5f6b7c]">
        <a href="#all">All</a>
        <Icon name="chevronRight" />
        <a href="#object-types">Object types</a>
        <Icon name="chevronRight" />
        <span className="font-semibold text-[#1c2127]">Search results</span>
      </nav>
      <ul className="pt-2">
        {results.map((row, i) => <ResultRow key={i} {...row} />)}
      </ul>
      <div className="pointer-events-none absolute -left-[5px] -top-[5px] right-0 h-[309px] border-[5px] border-[#ff5c4d]" />
    </aside>
  );
}

function StatusBar() {
  return (
    <footer className="flex h-[43px] shrink-0 justify-end bg-[#184a90] text-xl text-white">
      <button type="button" className="flex w-[325px] items-center border-l border-[#4a70a8] px-[17px] pt-1">
        <Icon name="branch" />
        <span className="h-[37px] w-[90px] bg-linear-to-b from-[#8a9bc4] to-[#7286b8]" />
        <span className="ml-1">Global Bran…</span>
        <Icon name="caret" className="ml-auto h-6 w-6" />
      </button>
      <button type="button" className="flex w-[103px] items-center justify-between border-l border-[#4a70a8] px-4 pt-1">
        <Icon name="folder" />
        <span className="flex h-[26px] w-[29px] items-center justify-center rounded-md bg-[#40659f] text-[17px]">3</span>
      </button>
      <button type="button" className="flex items-center gap-[13px] bg-[#2d72d2] px-[17px] pt-1">
        <Icon name="pull" />
        Create proposal
      </button>
      <button type="button" className="flex w-[177px] items-center gap-4 border-t border-[#c5cbd3] bg-white pl-[17px] pt-1 text-[#1c2127]">
        <span className="whitespace-nowrap">View branch</span>
        <Icon name="arrowUpRight" className="h-6 w-6 text-[#5f6b7c]" />
      </button>
    </footer>
  );
}

export default function App() {
  return (
    <div className="flex min-h-screen flex-col overflow-x-hidden bg-[#edeef3] font-['Noto_Sans_CJK_JP','Noto_Sans',sans-serif]">
      <Header />
      <main className="flex flex-1">
        <section className="relative flex min-w-0 flex-1 flex-col">
          <Graph />
          <div className="relative flex flex-1">
            <div className="relative min-w-0 flex-1">
              <Toolbar />
              <Legend />
            </div>
            <Rail />
          </div>
          <CanvasFooter />
        </section>
        <SearchPanel />
      </main>
      <StatusBar />
    </div>
  );
}
